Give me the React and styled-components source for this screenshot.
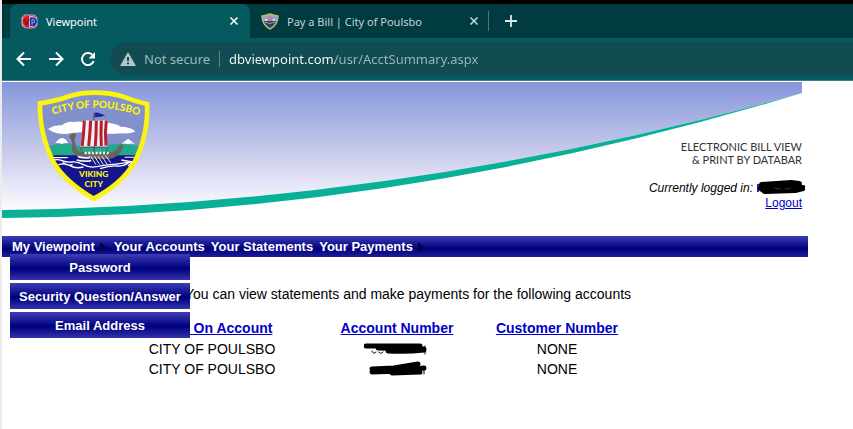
import React, {useState} from 'react';
import styled, {createGlobalStyle} from 'styled-components';


const menuItems = [
    {title: 'My Viewpoint', arrow: true, children: ['Password', 'Security Question/Answer', 'Email Address']},
    {title: 'Your Accounts'},
    {title: 'Your Statements'},
    {title: 'Your Payments', arrow: true}
];

const accounts = [
    {name: 'CITY OF POULSBO', customer: 'NONE', scribble: 'first'},
    {name: 'CITY OF POULSBO', customer: 'NONE', scribble: 'second'}
];


const CloseIcon = () => (
    <svg width="10" height="10" viewBox="0 0 10 10" stroke="currentColor" strokeWidth="1.6" fill="none">
        <path d="M1.5 1.5l7 7M8.5 1.5l-7 7"/>
    </svg>
);

const PlusIcon = () => (
    <svg width="12" height="12" viewBox="0 0 12 12" stroke="currentColor" strokeWidth="1.8" fill="none">
        <path d="M6 0v12M0 6h12"/>
    </svg>
);

const ArrowIcon = ({forward}) => (
    <svg width="16" height="16" viewBox="0 0 16 16" stroke="currentColor" strokeWidth="2" fill="none">
        {forward
            ? <path d="M1 8h13M8 1.5L14.5 8 8 14.5"/>
            : <path d="M15 8H2M8 1.5L1.5 8 8 14.5"/>}
    </svg>
);

const ReloadIcon = () => (
    <svg width="16" height="16" viewBox="0 0 16 16">
        <path d="M13.6 10.200A6 6 0 1 1 12.2 3.800" fill="none" stroke="currentColor" strokeWidth="2"/>
        <path d="M15 1v6.500H8.500z" fill="currentColor"/>
    </svg>
);

const WarningIcon = () => (
    <svg width="16" height="14" viewBox="0 0 16 14">
        <path d="M8 0l8 14H0z" fill="#b3c5c7"/>
        <path d="M7 5h2v4H7zM7 10.5h2v1.7H7z" fill="#104c52"/>
    </svg>
);

const ViewpointIcon = () => (
    <svg width="17" height="15" viewBox="0 0 17 15">
        <rect x="0.5" y="0.5" width="16" height="14" rx="5" fill="#c9b3cc"/>
        <path d="M8 2C3 2 1.500 4 1.500 7.500s2.500 5.500 6.500 5.500z" fill="#e8141f"/>
        <path d="M9 3.500h3c5 0 5 7 1 8.500H9z" fill="#1c2f9c"/>
        <path d="M3.500 5l2 6L8 5" fill="none" stroke="#7b1530" strokeWidth="1.400"/>
        <path d="M11 11V5.500h1.500q2 1.500 0 3.500h-1.500" fill="none" stroke="#7d8fd8" strokeWidth="1.200"/>
        <path d="M2 3Q8-1 15 3M2 12q6 4 13 0" fill="none" stroke="#c4485f" strokeWidth="1"/>
    </svg>
);

const SmallShield = () => (
    <svg width="18" height="17" viewBox="0 0 18 17">
        <path d="M1 3Q5 2.500 9 1q4 1.500 8 2 0 9-8 13Q1 12 1 3z" fill="#8fa2d4" stroke="#b8bd62" strokeWidth="1.400"/>
        <path d="M3 8h12q-1 4-6 7-5-3-6-7z" fill="#27436b"/>
        <path d="M4 6h10v2H4z" fill="#c5dce2"/>
        <path d="M6.500 4h5v4h-5z" fill="#c77c8c"/>
        <path d="M4 9q5 3 10 0" fill="none" stroke="#b9a27e"/>
    </svg>
);

const CityShield = () => (
    <svg width="132" height="122" viewBox="0 0 396 366" role="img" aria-label="City of Poulsbo, Viking City">
        <defs>
            <clipPath id="shield">
                <path d="M36 58Q90 50 125 36Q160 26 197 26Q250 26 285 38Q320 52 357 60Q362 150 318 238Q278 302 197 344Q110 292 77 235Q34 150 36 58Z"/>
            </clipPath>
            <path id="arc" d="M64 97Q200 44 344 99"/>
        </defs>
        <g clipPath="url(#shield)">
            <path d="M0 0h396v366H0z" fill="#8290cb"/>
            <path d="M60 134q20-12 42-10 14-14 38-10 22-4 34 6 40-8 66-4 30 4 38 12 30 0 44 14-12 8-40 6-60 4-90-2-50-4-76 4-40 0-56-16z" fill="#fff"/>
            <path d="M40 216v-18q30-16 56-18 40-4 60 8 40 0 70 0 30-12 70-8 40 6 66 12v24z" fill="#21a98c"/>
            <path d="M82 178q8-14 20-16 14 2 18 16-8-3-18 2-10-5-20-2zM280 180q12-10 20-16 10 6 20 16-12-3-20 1-10-4-20-1z" fill="#fff"/>
            <path d="M20 214h350v160H20z" fill="#14148c"/>
            <path d="M70 219h54l-10 4H70zM290 218h50v3h-50z" fill="#fff"/>
            <path d="M70 230q18-6 32 0t30 4 34 8 40 6 40-6 34-4 36-6M90 243q18-8 36 2t40 4M216 254q30-10 52-8t40-14M104 236q14 10 30 6M280 228l32 6M300 246l14-12" fill="none" stroke="#fff" strokeWidth="4"/>
            <path d="M124 160q0-10 14-13 8 4 6 10-6 6-3 18 0 14 7 24 12 8 32 7h58q20 0 30-11 4-12 14-14l4 6q-4 16-14 24-12 12-30 14h-42q-30 2-54-8-14-10-14-22 2-18-2-28z" fill="#6b645c"/>
            <path d="M146 228q20 6 44 2M150 218q20 6 36 2" fill="none" stroke="#f2eef2" strokeWidth="5"/>
            <path d="M170 207h76" stroke="#fff" strokeWidth="7" strokeDasharray="6 5"/>
            <path d="M188 216l16 26M199 216l16 26M210 216l16 26M221 216l16 24M232 214l16 22" stroke="#e8e8f0" strokeWidth="3"/>
            <path d="M198 86v120" stroke="#4a4450" strokeWidth="3"/>
            <path d="M200 86q10-2 14 2l18 6-12 4-20 2z" fill="#1c2890"/>
            <path d="M164 108q36 4 76 0-8 36-2 80-40-2-82 0 8-30 8-80z" fill="#f4ecf0"/>
            <path d="M169 109q-2 45-7 78M188 110q-2 40-6 76M205 110q0 38-3 76M220 110q-2 40 0 76M235 109q-5 38-1 76" fill="none" stroke="#b3202c" strokeWidth="9"/>
            <path d="M156 190l80 0M156 190l10 18M238 188l-2 20" stroke="#50485a" strokeWidth="2"/>
        </g>
        <path d="M36 58Q90 50 125 36Q160 26 197 26Q250 26 285 38Q320 52 357 60Q362 150 318 238Q278 302 197 344Q110 292 77 235Q34 150 36 58Z" fill="none" stroke="#fbf40e" strokeWidth="14"/>
        <ShieldText $size={30}><textPath href="#arc" startOffset="50%" textAnchor="middle">CITY OF POULSBO</textPath></ShieldText>
        <ShieldText $size={25} x="197" y="279" textAnchor="middle">VIKING</ShieldText>
        <ShieldText $size={25} x="197" y="309" textAnchor="middle">CITY</ShieldText>
    </svg>
);

const HeaderSwoosh = () => (
    <SwooshSvg viewBox="0 0 800 136" preserveAspectRatio="none" aria-hidden="true">
        <defs>
            <linearGradient id="sky" x1="0" y1="0" x2="0" y2="1">
                <stop offset="0" stopColor="#8795da"/>
                <stop offset="0.400" stopColor="#b4bee7"/>
                <stop offset="0.500" stopColor="#c3c5e9"/>
                <stop offset="1" stopColor="#fcfcff"/>
            </linearGradient>
        </defs>
        <path d="M0 0H800V11Q400 123.500 0 128z" fill="url(#sky)"/>
        <path d="M0 128Q400 123.500 800 11Q400 133 0 136z" fill="#07b096"/>
    </SwooshSvg>
);

const UserScribble = () => (
    <svg width="48" height="16" viewBox="0 0 48 16" role="img" aria-label="User name hidden">
        <path d="M1 4v8" stroke="#2626a8" strokeWidth="2"/>
        <path d="M5 5L34 3 42 4 38 8 46 8 38 10 8 11 4 8H36" fill="none" stroke="#000" strokeWidth="6" strokeLinecap="round" strokeLinejoin="round"/>
        <path d="M17 8l7 1M28 9l6-1" stroke="#333" strokeWidth="1"/>
    </svg>
);

const NumberScribble = ({kind}) => (
    <svg width="66" height="16" viewBox="0 0 66 16" role="img" aria-label="Account number hidden">
        {kind === 'first'
            ? <g fill="none" stroke="#000" strokeLinecap="round">
                <path d="M2 5H56M14 7L60 8M24 10Q44 11 60 9" strokeWidth="5"/>
                <path d="M8 10q1 4 4 1M15 11q1 3 4 0M61 5v8" strokeWidth="1"/>
            </g>
            : <g fill="none" stroke="#000" strokeLinecap="round">
                <path d="M8 8L30 7 54 3M8 11L36 10 60 7M28 12L56 11" strokeWidth="5"/>
                <path d="M60 6v7" strokeWidth="1"/>
            </g>}
    </svg>
);


const BrowserBar = () => {
    const [url, setUrl] = useState('dbviewpoint.com/usr/AcctSummary.aspx');

    return (
        <Browser>
            <TabStrip>
                <Tab $active>
                    <ViewpointIcon/>
                    <TabTitle type="button">Viewpoint</TabTitle>
                    <IconButton type="button" aria-label="Close Viewpoint"><CloseIcon/></IconButton>
                </Tab>
                <Tab>
                    <SmallShield/>
                    <TabTitle type="button">Pay a Bill | City of Poulsbo</TabTitle>
                    <IconButton type="button" aria-label="Close Pay a Bill"><CloseIcon/></IconButton>
                </Tab>
                <NewTab>
                    <IconButton type="button" aria-label="New tab"><PlusIcon/></IconButton>
                </NewTab>
            </TabStrip>
            <Toolbar>
                <ToolbarButtons>
                    <IconButton type="button" aria-label="Back"><ArrowIcon/></IconButton>
                    <IconButton type="button" aria-label="Forward"><ArrowIcon forward/></IconButton>
                    <IconButton type="button" aria-label="Reload"><ReloadIcon/></IconButton>
                </ToolbarButtons>
                <AddressBar>
                    <SecurityLabel type="button"><WarningIcon/>Not secure</SecurityLabel>
                    <UrlInput aria-label="Address" spellCheck={false} value={url} onChange={e => setUrl(e.target.value)}/>
                </AddressBar>
            </Toolbar>
        </Browser>
    );
};


const Menu = () => {
    const [open, setOpen] = useState('My Viewpoint');

    return (
        <MenuBar>
            {menuItems.map(item => (
                <MenuItem key={item.title}>
                    <MenuButton type="button" $arrow={item.arrow} onClick={() => setOpen(open === item.title ? '' : item.title)}>
                        {item.title}
                        {item.arrow && <MenuArrow viewBox="0 0 6 10" aria-hidden="true"><path d="M0 0l6 5-6 5z"/></MenuArrow>}
                    </MenuButton>
                    {item.children && open === item.title &&
                        <SubMenu>
                            {item.children.map(child => <SubMenuLink key={child} href="#">{child}</SubMenuLink>)}
                        </SubMenu>}
                </MenuItem>
            ))}
        </MenuBar>
    );
};


const App = () => (
    <Page>
        <GlobalStyle/>
        <BrowserBar/>
        <Header>
            <HeaderSwoosh/>
            <CityShield/>
            <HeaderInfo>
                <Tagline>ELECTRONIC BILL VIEW<br/>&amp; PRINT BY DATABAR</Tagline>
                <LoggedIn><em>Currently logged in:</em><UserScribble/></LoggedIn>
                <LogoutLink href="#">Logout</LogoutLink>
            </HeaderInfo>
        </Header>
        <Menu/>
        <Content>
            <Message>You can view statements and make payments for the following accounts</Message>
            <AccountTable>
                <colgroup>
                    <Col $width={184}/>
                    <Col $width={186}/>
                    <Col $width={134}/>
                </colgroup>
                <thead>
                    <tr>
                        <th scope="col"><a href="#">Name On Account</a></th>
                        <th scope="col"><a href="#">Account Number</a></th>
                        <th scope="col"><a href="#">Customer Number</a></th>
                    </tr>
                </thead>
                <tbody>
                    {accounts.map((account, index) => (
                        <tr key={index}>
                            <td>{account.name}</td>
                            <td><NumberScribble kind={account.scribble}/></td>
                            <td>{account.customer}</td>
                        </tr>
                    ))}
                </tbody>
            </AccountTable>
        </Content>
    </Page>
);

export default App;



const GlobalStyle = createGlobalStyle`
    * {
        box-sizing: border-box;
    }
    body {
        margin: 0;
        background: #fff;
        font-family: "Liberation Sans", Arial, sans-serif;
        font-size: 14px;
    }
    svg {
        display: block;
        flex-shrink: 0;
    }
    button {
        border: 0;
        padding: 0;
        background: none;
        color: inherit;
        font: inherit;
        cursor: pointer;
    }
`;

const Page = styled.div`
    min-height: 100vh;
    border-left: 2px solid #ececec;
`;

const Browser = styled.div`
    border-top: 4px solid #000;
    border-bottom: 1px solid #3c8085;
    background: #055a60;
    color: #fff;
    font-family: "Noto Sans", "Open Sans", sans-serif;
    font-size: 11px;
`;

const TabStrip = styled.div`
    display: flex;
    height: 34px;
    padding-left: 8px;
    background: #003c3f;
`;

const Tab = styled.div`
    display: flex;
    align-items: center;
    gap: 8px;
    width: 240px;
    padding: 0 11px;
    border-radius: 8px 8px 0 0;
    background: ${({$active}) => $active ? '#055a60' : 'transparent'};
    color: ${({$active}) => $active ? '#fff' : '#c3d3d4'};
`;

const TabTitle = styled.button`
    flex: 1;
    text-align: left;
    white-space: nowrap;
`;

const IconButton = styled.button`
    display: flex;
    align-items: center;
    justify-content: center;
`;

const NewTab = styled.div`
    display: flex;
    align-items: center;
    height: 20px;
    margin-top: 7px;
    margin-left: -2px;
    padding-left: 16px;
    border-left: 1px solid #4d7678;
    color: #dce8e8;
`;

const Toolbar = styled.div`
    display: flex;
    align-items: center;
    height: 42px;
    padding-left: 14px;
`;

const ToolbarButtons = styled.div`
    display: flex;
    gap: 16px;
    width: 94px;
`;

const AddressBar = styled.div`
    display: flex;
    flex: 1;
    align-items: center;
    height: 34px;
    padding-left: 10px;
    border-radius: 17px 0 0 17px;
    background: #104c52;
    font-size: 13px;
`;

const SecurityLabel = styled.button`
    display: flex;
    align-items: center;
    gap: 8px;
    height: 16px;
    padding-right: 9px;
    border-right: 1px solid #5f8589;
    color: #9fb7ba;
    white-space: nowrap;
`;

/* the host name is brighter than the path behind it */
const UrlInput = styled.input`
    flex: 1;
    min-width: 0;
    margin-left: 9px;
    padding: 0;
    border: 0;
    outline: 0;
    background: linear-gradient(90deg, #fff 106px, #9fb7ba 106px);
    background-clip: text;
    -webkit-background-clip: text;
    -webkit-text-fill-color: transparent;
    color: #fff;
    font: inherit;
`;

const Header = styled.header`
    position: relative;
    display: flex;
    justify-content: space-between;
    align-items: flex-start;
    max-width: 800px;
    min-height: 154px;
    margin-top: 1px;
    padding: 2px 0 0 26px;
`;

const SwooshSvg = styled.svg`
    position: absolute;
    top: 0;
    left: 0;
    z-index: -1;
    width: 100%;
    height: 136px;
`;

const ShieldText = styled.text`
    fill: #fbf40e;
    font-family: Lato, sans-serif;
    font-size: ${({$size}) => $size}px;
    font-weight: 900;
`;

const HeaderInfo = styled.div`
    display: flex;
    flex-direction: column;
    align-items: flex-end;
    padding-top: 56px;
    font-size: 12px;
`;

const Tagline = styled.div`
    color: #333;
    font-family: Lato, sans-serif;
    font-size: 11px;
    line-height: 13px;
    text-align: right;
`;

const LoggedIn = styled.div`
    display: flex;
    align-items: center;
    gap: 4px;
    height: 16px;
    margin: 14px -3px 0 0;
`;

const LogoutLink = styled.a`
    color: #0000d0;
    line-height: 14px;
`;

const MenuBar = styled.nav`
    display: flex;
    gap: 6px;
    max-width: 806px;
    height: 21px;
    padding-left: 8px;
    background: linear-gradient(#3d3db4, #00007c 60%, #1e1e96);
    color: #fff;
    font-size: 13px;
    font-weight: bold;
`;

const MenuItem = styled.div`
    position: relative;
    display: flex;

    &:first-child {
        padding-left: 2px;
    }
`;

const MenuButton = styled.button`
    display: flex;
    align-items: center;
    gap: 5px;
    padding-right: ${({$arrow}) => $arrow ? 2 : 0}px;
    white-space: nowrap;
`;

const MenuArrow = styled.svg`
    width: 6px;
    height: 10px;
    fill: #04043c;
`;

const SubMenu = styled.div`
    position: absolute;
    top: 18px;
    left: 0;
    z-index: 1;
    display: grid;
    gap: 3px;
    width: 180px;
`;

const SubMenuLink = styled.a`
    height: 26px;
    background: linear-gradient(#3d3db4, #00007c 55%, #3333ac);
    color: #fff;
    line-height: 28px;
    text-align: center;
    text-decoration: none;
    white-space: nowrap;
`;

const Content = styled.main`
    max-width: 806px;
    padding-top: 28px;
`;

const Message = styled.p`
    margin: 0 0 14px;
    padding-left: 6px;
    line-height: 18px;
    text-align: center;
`;

const AccountTable = styled.table`
    margin-left: 118px;
    border-collapse: collapse;
    table-layout: fixed;
    text-align: center;

    th, td {
        height: 20px;
        padding: 0;
        line-height: 20px;
    }
    thead th {
        height: 22px;
        padding-bottom: 1px;
    }
    th a {
        color: #0000c8;
    }
    td svg {
        margin: 0 auto;
    }
`;

const Col = styled.col`
    width: ${({$width}) => $width}px;
`;
